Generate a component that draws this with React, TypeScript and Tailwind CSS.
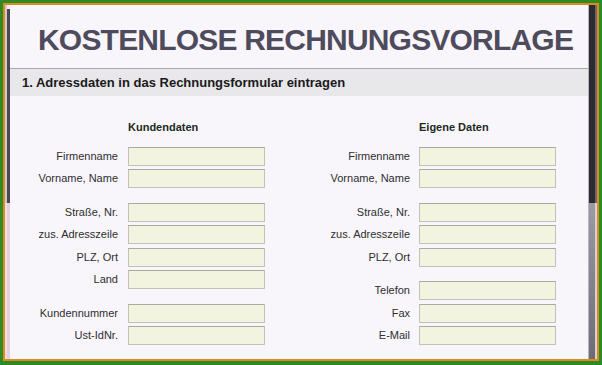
type Row = { label: string }

const left: Row[][] = [
  [{ label: 'Firmenname' }, { label: 'Vorname, Name' }],
  [{ label: 'Straße, Nr.' }, { label: 'zus. Adresszeile' }, { label: 'PLZ, Ort' }, { label: 'Land' }],
  [{ label: 'Kundennummer' }, { label: 'Ust-IdNr.' }],
]

const right: Row[][] = [
  [{ label: 'Firmenname' }, { label: 'Vorname, Name' }],
  [{ label: 'Straße, Nr.' }, { label: 'zus. Adresszeile' }, { label: 'PLZ, Ort' }],
  [{ label: 'Telefon' }, { label: 'Fax' }, { label: 'E-Mail' }],
]

function Field({ label, labelWidth, gap }: { label: string; labelWidth: string; gap: string }) {
  return (
    <div className="flex items-center h-[22.5px]">
      <span className={`${labelWidth} text-right text-[11px] leading-none text-[#2e2e2e]`}>{label}</span>
      <span
        className={`${gap} block w-[137px] h-[19px] bg-[#f3f4e0] border border-[#c2c3b8] border-t-[#a9aaa2]`}
      />
    </div>
  )
}

function Column({
  title,
  groups,
  labelWidth,
  gap,
}: {
  title: string
  groups: Row[][]
  labelWidth: string
  gap: string
}) {
  return (
    <div className="flex flex-col">
      <div className="flex h-[14px] items-center">
        <span className={`${labelWidth} shrink-0`} />
        <span className={`${gap} text-[11px] font-bold text-[#1c2a1c]`}>{title}</span>
      </div>
      <div className="mt-[11px] flex flex-col gap-[11px]">
        {groups.map((g, i) => (
          <div key={i} className="flex flex-col">
            {g.map((r) => (
              <Field key={r.label} label={r.label} labelWidth={labelWidth} gap={gap} />
            ))}
          </div>
        ))}
      </div>
    </div>
  )
}

export default function App() {
  return (
    <div
      className="w-[602px] h-[365px] border-[3px] border-b-[4px] border-[#2e8a24] bg-[#2e8a24]"
      style={{ fontFamily: '"Liberation Sans", Arial, sans-serif' }}
    >
      <div className="flex h-full border-2 border-[#de8a1d]">
        <div className="w-[5px] flex">
          <div className="w-[2px] bg-[linear-gradient(to_bottom,#cfcbd3_0,#cfcbd3_56%,#eedce6_56%)]" />
          <div className="w-[3px] bg-[linear-gradient(to_bottom,#f0eef3_0,#f0eef3_1%,#4a4756_1%,#4a4756_56%,#e4d0dc_56%)]" />
        </div>

        <div className="flex-1 flex flex-col bg-[#f8f6fa]">
          <div className="h-[64px] pt-[20px] pl-[28px] border-b border-[#a9a8ad]">
            <h1 className="text-[30px] leading-none font-bold tracking-[-0.8px] text-[#4e4b5d]">
              KOSTENLOSE RECHNUNGSVORLAGE
            </h1>
          </div>
          <div className="h-[27px] flex items-center pl-[12px] bg-[#e8e7ea]">
            <span className="text-[13px] font-bold text-[#1a1a1a]">
              1. Adressdaten in das Rechnungsformular eintragen
            </span>
          </div>
          <div className="flex pt-[24px]">
            <Column title="Kundendaten" groups={left} labelWidth="w-[108px]" gap="ml-[10px]" />
            <Column title="Eigene Daten" groups={right} labelWidth="w-[145px]" gap="ml-[9px]" />
          </div>
        </div>

        <div className="w-[9px] flex">
          <div className="w-[1px] bg-[#b8b6bd]" />
          <div className="w-[6px] bg-[linear-gradient(to_bottom,#2b2b31_0,#2b2b31_56%,#9c9aa3_56%,#6d6b74_100%)]" />
          <div className="w-[2px] bg-[linear-gradient(to_bottom,#6a6870_0,#6a6870_56%,#d6d2da_56%)]" />
        </div>
      </div>
    </div>
  )
}
